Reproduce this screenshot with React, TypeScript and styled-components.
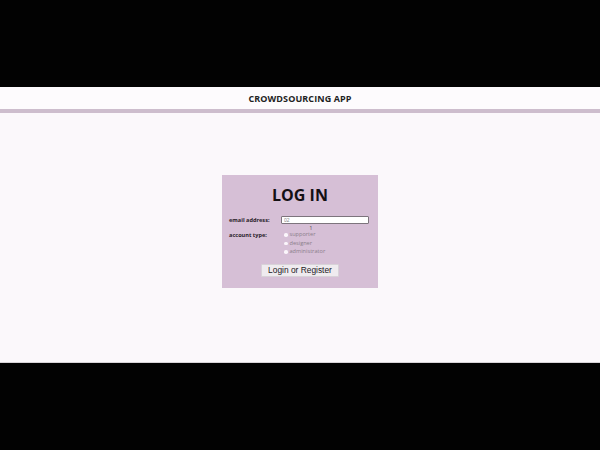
import React, { useState } from 'react';
import styled, { createGlobalStyle } from 'styled-components';

const GlobalStyle = createGlobalStyle`
  html, body {
    margin: 0;
    padding: 0;
    background: #000;
  }
  body {
    font-family: 'Open Sans', 'Liberation Sans', sans-serif;
  }
`;

const Frame = styled.div`
  width: 600px;
  height: 450px;
  display: flex;
  flex-direction: column;
  background: #000;
`;

const Letterbox = styled.div<{ $h: number }>`
  height: ${(p) => p.$h}px;
  flex-shrink: 0;
  background: #020202;
`;

const Screen = styled.div`
  height: 276px;
  display: flex;
  flex-direction: column;
  background: #fbf8fb;
  border-bottom: 1px solid #d8d4d8;
  box-sizing: border-box;
`;

const Header = styled.header`
  height: 22px;
  display: flex;
  align-items: center;
  justify-content: center;
  background: #fdfbfd;
  border-bottom: 4px solid #cdbdcd;
  font-size: 9px;
  font-weight: 700;
  color: #222;
  letter-spacing: 0.1px;
`;

const Main = styled.main`
  flex: 1;
  display: flex;
  justify-content: center;
  padding-top: 62px;
`;

const Card = styled.form`
  width: 156px;
  height: 113px;
  box-sizing: border-box;
  background: #d6bfd6;
  display: flex;
  flex-direction: column;
  align-items: center;
  padding-top: 9px;
`;

const Title = styled.h1`
  margin: 0 0 10px;
  font-size: 16px;
  line-height: 22px;
  font-weight: 700;
  color: #141014;
`;

const Row = styled.div`
  width: 100%;
  display: grid;
  grid-template-columns: 59px 1fr;
  padding-right: 9px;
  box-sizing: border-box;
`;

const Label = styled.label`
  padding-left: 7px;
  font-size: 5.6px;
  font-weight: 700;
  color: #2a222a;
  line-height: 8px;
`;

const EmailInput = styled.input`
  width: 88px;
  height: 8px;
  box-sizing: border-box;
  border: 1px solid #7d747d;
  border-radius: 1px;
  background: #fff;
  padding: 0 2px;
  font-size: 5px;
  color: #888;
  font-family: 'Liberation Sans', sans-serif;
  outline: none;
`;

const Counter = styled.div`
  text-align: center;
  font-size: 5px;
  color: #444;
  line-height: 6px;
  margin: 1px 0 0 22px;
  width: 100%;
`;

const Options = styled.div`
  display: flex;
  flex-direction: column;
  gap: 1px;
  padding-left: 3px;
`;

const Option = styled.label`
  display: flex;
  align-items: center;
  gap: 2px;
  font-size: 5.6px;
  line-height: 7.5px;
  color: #8a7e8a;
`;

const Dot = styled.span`
  width: 3.5px;
  height: 3.5px;
  border-radius: 50%;
  background: #fbf6fb;
`;

const Button = styled.button`
  margin-top: 8px;
  width: 78px;
  height: 13px;
  padding: 0;
  border: 1px solid #d8d2d8;
  border-radius: 1px;
  background: #efebef;
  font-family: 'Liberation Sans', Arial, sans-serif;
  font-size: 8.4px;
  color: #1e1a1e;
  line-height: 11px;
`;

const accountTypes = ['supporter', 'designer', 'administrator'];

function App() {
  const [email, setEmail] = useState('02');

  return (
    <>
      <GlobalStyle />
      <Frame>
        <Letterbox $h={87} />
        <Screen>
          <Header>CROWDSOURCING APP</Header>
          <Main>
            <Card onSubmit={(e) => e.preventDefault()}>
              <Title>LOG IN</Title>
              <Row>
                <Label>email address:</Label>
                <EmailInput value={email} onChange={(e) => setEmail(e.target.value)} />
              </Row>
              <Counter>1</Counter>
              <Row>
                <Label>account type:</Label>
                <Options>
                  {accountTypes.map((t) => (
                    <Option key={t}>
                      <Dot />
                      {t}
                    </Option>
                  ))}
                </Options>
              </Row>
              <Button type="submit">Login or Register</Button>
            </Card>
          </Main>
        </Screen>
        <Letterbox $h={87} />
      </Frame>
    </>
  );
}

export default App;
